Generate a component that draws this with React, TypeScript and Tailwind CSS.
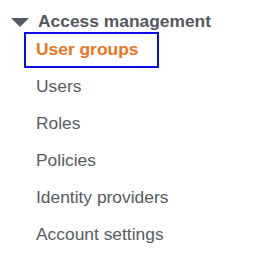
import React from 'react';

const items = ['Users', 'Roles', 'Policies', 'Identity providers', 'Account settings'];

export default function App() {
    return (
        <div className="w-[257px] h-[262px] bg-white overflow-hidden font-['Liberation_Sans',Arial,sans-serif] text-[17.4px] text-[#575b61]">
            {/* section header */}
            <div className="flex items-start h-[32px] pt-[11px] pl-[11px]">
                <svg width="18" height="9" viewBox="0 0 18 9" className="mt-[7px] shrink-0">
                    <polygon points="0,0 18,0 9,9" fill="#555b63" />
                </svg>
                <span className="ml-[9px] leading-[21px] font-bold text-[#545960]">Access management</span>
            </div>

            <ul>
                <li className="h-[36px]">
                    <div className="ml-[24px] w-[135px] h-[36px] box-border border-2 border-[#0b0be6] pl-[10px] leading-[30px] font-bold text-[#e9761f]">
                        User groups
                    </div>
                </li>
                {items.map((label) => (
                    <li key={label} className="h-[37px] leading-[37px] pl-[36px]">
                        {label}
                    </li>
                ))}
            </ul>
        </div>
    );
}
